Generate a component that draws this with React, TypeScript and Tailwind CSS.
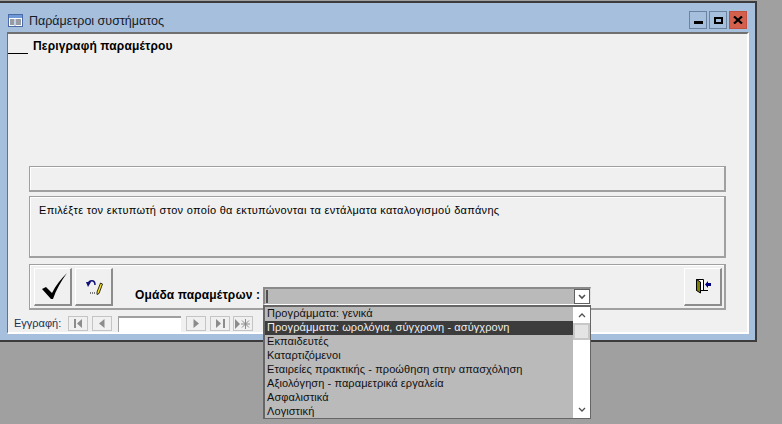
const items = [
  "Προγράμματα: γενικά",
  "Προγράμματα: ωρολόγια, σύγχρονη - ασύγχρονη",
  "Εκπαιδευτές",
  "Καταρτιζόμενοι",
  "Εταιρείες πρακτικής - προώθηση στην απασχόληση",
  "Αξιολόγηση - παραμετρικά εργαλεία",
  "Ασφαλιστικά",
  "Λογιστική",
];

const raised = "border border-t-white border-l-white border-r-2 border-b-2 border-r-[#8c8c8c] border-b-[#8c8c8c] bg-[#f0f0f0]";
const groove = "border border-[#a0a0a0] border-r-2 border-b-2 shadow-[inset_1px_1px_0_#fff]";

function WinButton({ children, close }: { children: React.ReactNode; close?: boolean }) {
  return (
    <div className={`w-[18px] h-[18px] border flex items-center justify-center ${close ? "bg-[#d2604c] border-[#c2503c]" : "bg-[#a6bfdc] border-[#6a84a0]"}`}>
      {children}
    </div>
  );
}

function NavButton({ children }: { children: React.ReactNode }) {
  return (
    <div className="w-[20px] h-[15px] border border-[#c4c4c4] bg-[#f0f0f0] flex items-center justify-center">
      {children}
    </div>
  );
}

export default function App() {
  return (
    <div className="relative w-[782px] h-[424px] bg-[#a0a0a0] overflow-hidden pt-px font-['Liberation_Sans',Arial,sans-serif] text-black">
      {/* window */}
      <div className="w-[757px] h-[341px] bg-[#a6bfdc] border-t-2 border-r-2 border-b-2 border-[#3c3c3c] flex flex-col pl-[7px] pr-[6px]">
        <div className="h-[29px] shrink-0 flex items-center">
          <svg width="15" height="13" viewBox="0 0 15 13" className="ml-px mt-[5px]">
            <rect x="0.5" y="0.5" width="14" height="12" fill="#fff" stroke="#4a6aa8" />
            <rect x="1" y="1" width="13" height="3" fill="#6f9ad8" />
            <path d="M2 6h4M2 8h4M2 10h4M8 6h5M8 8h5M8 10h5" stroke="#303848" />
            <path d="M7 5v7" stroke="#8aa0c0" />
          </svg>
          <span className="ml-[6px] mt-[8px] text-[12.5px] text-[#141c28]">Παράμετροι συστήματος</span>
          <div className="ml-auto mr-[2px] mt-[5px] flex gap-[2px]">
            <WinButton>
              <div className="w-[9px] h-[3px] mt-[4px] bg-black" />
            </WinButton>
            <WinButton>
              <div className="w-[9px] h-[7px] border-2 border-black" />
            </WinButton>
            <WinButton close>
              <svg width="10" height="8" viewBox="0 0 10 8">
                <path d="M1 0.5 L9 7.5 M9 0.5 L1 7.5" stroke="#000" strokeWidth="2.2" />
              </svg>
            </WinButton>
          </div>
        </div>

        {/* form panel */}
        <div className="h-[302px] shrink-0 bg-[#f0f0f0] border-t-2 border-l border-[#707070] border-r-2 border-r-white border-b-2 border-b-white flex flex-col">
          <div className="h-[132px] shrink-0 flex items-start">
            <div className="w-[20px] h-[20px] border-b border-black" />
            <span className="ml-[5px] mt-[5px] text-[12px] font-bold tracking-[0.15px] leading-[14px]">Περιγραφή παραμέτρου</span>
          </div>

          <div className="mx-[21px] flex flex-col">
            <div className={`h-[26px] ${groove}`} />
            <div className={`mt-1 h-[62px] pl-[9px] pt-[6px] text-[11px] tracking-[0.3px] leading-[14px] ${groove}`}>
              Επιλέξτε τον εκτυπωτή στον οποίο θα εκτυπώνονται τα εντάλματα καταλογισμού δαπάνης
            </div>
            <div className={`mt-[6px] h-[46px] flex items-center pl-[4px] ${groove}`}>
              <div className={`w-[38px] h-[38px] flex items-center justify-center ${raised}`}>
                <svg width="28" height="28" viewBox="0 0 28 28">
                  <path d="M3 17 L7 15 L13 21 C17 13 22 7 28 1 C22 9 17 18 14 27 L12 27 Z" fill="#000" />
                </svg>
              </div>
              <div className={`ml-[3px] w-[38px] h-[38px] flex items-start justify-center pt-[10px] ${raised}`}>
                <svg width="18" height="17" viewBox="0 0 18 17">
                  <path d="M3 5 C4 1 10 0 10 6" fill="none" stroke="#10107a" strokeWidth="1.5" />
                  <path d="M1 3 L6 3 L3 8 Z" fill="#10107a" />
                  <path d="M12 13 L15.5 4 L17.5 5 L14 14.5 L12 15.5 Z" fill="#f5e020" stroke="#000" strokeWidth="0.8" />
                  <path d="M5 14h1M7 14h1M9 14h1" stroke="#000" />
                </svg>
              </div>
              <span className="ml-[22px] mt-[17px] text-[12px] font-bold tracking-[0.13px] whitespace-nowrap">Ομάδα παραμέτρων :</span>
              <div className={`ml-auto mr-[2px] w-[38px] h-[38px] flex items-center justify-center ${raised}`}>
                <svg width="18" height="16" viewBox="0 0 18 16">
                  <path d="M2.5 1.5 H9.5 V12.5 H2.5 Z" fill="#fff" stroke="#000" />
                  <path d="M2.5 1.5 L6.5 4 V15 L2.5 12.5 Z" fill="#808000" stroke="#000" />
                  <path d="M9 12.5 H14" stroke="#000" />
                  <path d="M11 6.5 L14 3 V5 H17 V8 H14 V10 Z" fill="#000080" />
                </svg>
              </div>
            </div>
          </div>

          {/* record navigator */}
          <div className="mt-[5px] ml-[6px] h-[18px] flex items-center text-[11px] text-[#1c3050]">
            <span className="w-[54px]">Εγγραφή:</span>
            <div className="flex gap-[4px]">
              <NavButton>
                <svg width="9" height="9" viewBox="0 0 9 9"><path d="M0 0h2v9H0zM8 0v9L3 4.5z" fill="#8c8c8c" /></svg>
              </NavButton>
              <NavButton>
                <svg width="6" height="9" viewBox="0 0 6 9"><path d="M5.5 0v9L0 4.5z" fill="#8c8c8c" /></svg>
              </NavButton>
            </div>
            <div className="ml-[6px] w-[63px] h-[16px] bg-white border-t-2 border-l border-t-[#a0a0a0] border-l-[#a0a0a0]" />
            <div className="ml-[5px] flex gap-[4px]">
              <NavButton>
                <svg width="6" height="9" viewBox="0 0 6 9"><path d="M0.5 0v9L6 4.5z" fill="#8c8c8c" /></svg>
              </NavButton>
              <NavButton>
                <svg width="9" height="9" viewBox="0 0 9 9"><path d="M0 0v9l5-4.5zM7 0h2v9H7z" fill="#8c8c8c" /></svg>
              </NavButton>
              <div className="-ml-px">
                <NavButton>
                  <svg width="16" height="10" viewBox="0 0 16 10">
                    <path d="M0 0v10l5-5z" fill="#8c8c8c" />
                    <path d="M10.5 0v10M6 5h9M7 1.5l7 7M14 1.5l-7 7" stroke="#8c8c8c" />
                  </svg>
                </NavButton>
              </div>
            </div>
          </div>
        </div>
      </div>

      {/* combo box */}
      <div className="absolute left-[263px] top-[287px] w-[328px] h-[18px] bg-[#bababa] border-t-2 border-l-2 border-[#8a8a8a] border-r border-b border-r-[#e0e0e0] border-b-white flex items-center">
        <div className="ml-[1px] w-[2px] h-[13px] bg-[#505050]" />
        <div className="ml-auto w-[16px] h-[15px] bg-white border border-[#606060] flex items-center justify-center">
          <svg width="8" height="6" viewBox="0 0 8 6"><path d="M1 1l3 3 3-3" fill="none" stroke="#505050" strokeWidth="1.6" /></svg>
        </div>
      </div>

      {/* dropdown list */}
      <div className="absolute left-[263px] top-[305px] w-[328px] h-[114px] bg-[#bababa] border-2 border-[#666] border-r border-b flex text-[11px] tracking-[0.08px]">
        <div className="flex-1 min-w-0">
          {items.map((item, i) => (
            <div
              key={item}
              className={`h-[14px] leading-[12px] pl-[2px] whitespace-nowrap ${i === 1 ? "bg-[#3c3c3c] text-[#f0f0f0]" : "text-[#101010]"}`}
            >
              {item}
            </div>
          ))}
        </div>
        <div className="w-[17px] bg-white flex flex-col items-center">
          <div className="h-[16px] flex items-center justify-center">
            <svg width="8" height="6" viewBox="0 0 8 6"><path d="M1 5l3-3 3 3" fill="none" stroke="#505050" strokeWidth="1.3" /></svg>
          </div>
          <div className="w-full h-[17px] bg-[#e4e4e4] border-2 border-[#c8c8c8]" />
          <div className="mt-auto h-[16px] flex items-center justify-center">
            <svg width="8" height="6" viewBox="0 0 8 6"><path d="M1 1l3 3 3-3" fill="none" stroke="#505050" strokeWidth="1.3" /></svg>
          </div>
        </div>
      </div>
    </div>
  );
}
